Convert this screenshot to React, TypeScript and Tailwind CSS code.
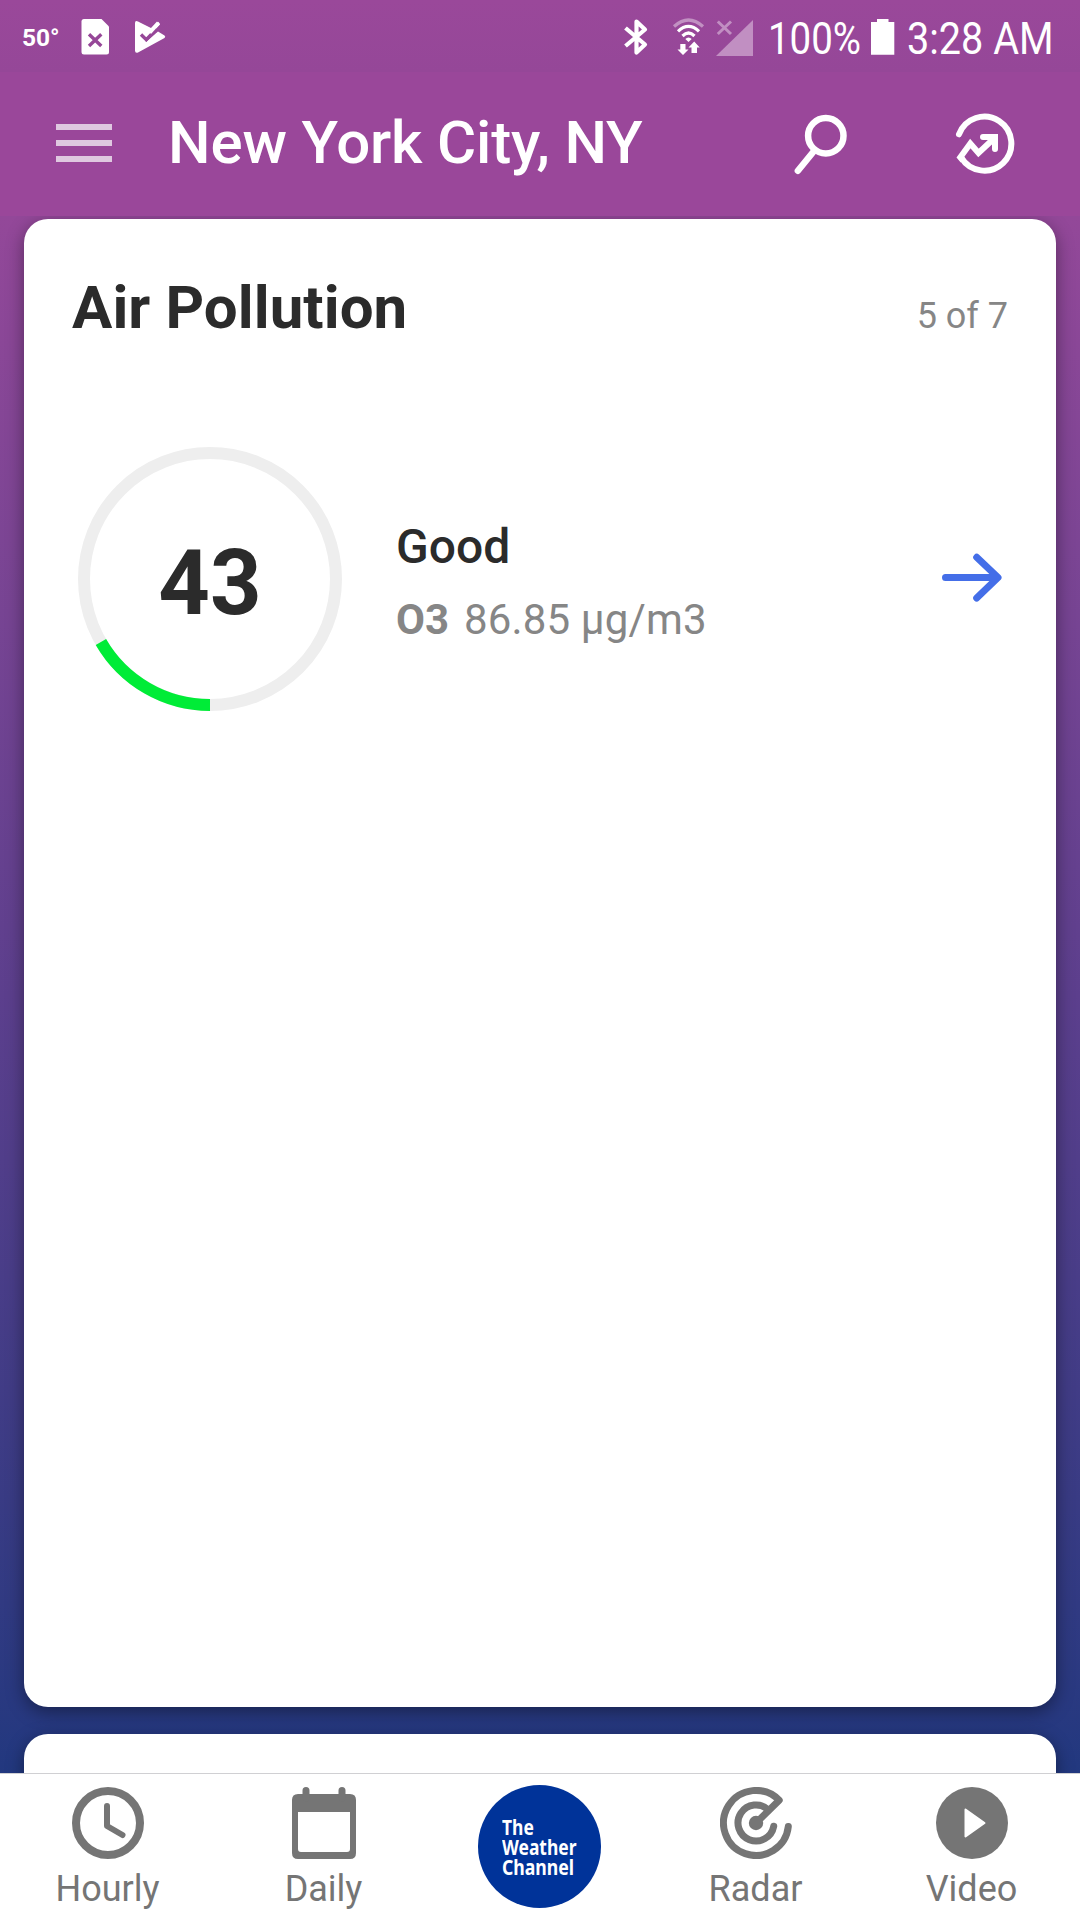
import React from "react";

function StatusBar() {
  return (
    <div className="flex h-[72px] items-center bg-linear-to-b from-[#9a489a] to-[#954798] text-white">
      <span className="ml-[22px] w-[59px] pt-[3px] text-[24.5px] leading-6 font-bold">50°</span>
      <svg className="mt-[2px] h-[36px] w-[28px]" viewBox="81 19 28 36">
        <path d="M84 19H101.500L109 26.500V52q0 2.500-2.500 2.500H84q-2.500 0-2.500-2.500V21.500Q81.500 19 84 19Z" fill="#fff" />
        <path d="M89 34.300L101.300 46M101.300 34.300L89 46" stroke="#964798" strokeWidth="3.400" />
      </svg>
      <svg className="ml-[26px] mt-[2px] h-[34px] w-[31px]" viewBox="135 20 31 34">
        <path d="M135 23q0-3 3-1.600L151 28L157 21.500L160 24.500L146 39L140.500 33.500L142 32L146 42L158 31.500L164.500 35.500q1.500 1.200 0 2.500L138 52.500q-3 1-3-2Z" fill="#fff" />
        <path d="M141 34.500L146.300 39.700L156.500 29" fill="none" stroke="#964798" strokeWidth="3.400" />
        <path d="M148.500 31L158.300 21.800L160 24L151 34Z" fill="#fff" />
      </svg>
      <div className="ml-auto flex items-center">
        <svg className="mt-[2px] h-[38px] w-[24px]" viewBox="624 18 24 38">
          <path d="M625.500 28L645 44.500L636.500 52.500V21.500L645 29.500L625.500 46" fill="none" stroke="#fff" strokeWidth="4.200" strokeLinejoin="round" />
        </svg>
        <svg className="ml-[24px] mt-[2px] h-[38px] w-[33px]" viewBox="672 18 33 38">
          <g fill="none" stroke="#fff" strokeWidth="3.200">
            <path d="M674 26.500Q688.500 13.500 703 26.500" opacity=".4" />
            <path d="M678 31.300Q688.500 21.500 699 31.300" />
            <path d="M682.500 36Q688.500 30 694.500 36" />
          </g>
          <path d="M688.500 42L685.300 39Q688.500 36 691.700 39Z" fill="#fff" />
          <path d="M680.300 44H685.500V49.500H688.500L683 55L677.500 49.500H680.300ZM691.500 53V47.500H688.500L694.200 41.500L699.700 47.500H697V53Z" fill="#fff" />
        </svg>
        <svg className="ml-[11px] mt-[2px] h-[37px] w-[37px]" viewBox="716 18 37 37">
          <path d="M753 19V55H716Z" fill="#c18fc2" />
          <path d="M717.800 20.500L731 33M731 20.500L717.800 33" stroke="#c18fc2" strokeWidth="3" />
        </svg>
        <div className="ml-[15px] w-[103px] pt-[5px]">
          <span className="block w-max origin-left scale-x-[0.855] text-[45px] leading-[72px]">100%</span>
        </div>
        <svg className="mt-[2px] h-[36px] w-[24px]" viewBox="871 19 24 36">
          <path d="M877 19H888.500V22H894.300V54.700H871V22H877Z" fill="#fff" />
        </svg>
        <div className="ml-[12px] w-[173px] pt-[5px]">
          <span className="block w-max origin-left scale-x-[0.88] text-[45px] leading-[72px]">3:28 AM</span>
        </div>
      </div>
    </div>
  );
}

function AppBar() {
  return (
    <div className="flex h-36 items-center bg-[#9a479a] pl-14 text-white">
      <div className="flex w-14 flex-col gap-2.5 pb-0.5">
        <div className="h-1.5 bg-[#dfc8e0]" />
        <div className="h-1.5 bg-[#dfc8e0]" />
        <div className="h-1.5 bg-[#dfc8e0]" />
      </div>
      <h1 className="ml-14 pb-[3px] text-[60px] leading-[70px] font-medium tracking-[-0.15px]">New York City, NY</h1>
      <svg className="ml-auto h-[62px] w-[54px]" viewBox="794 113 54 62" fill="none" stroke="#fff" strokeLinecap="round">
        <circle cx="825.800" cy="135.700" r="17.700" strokeWidth="6.500" />
        <path d="M814 151L797.900 170.800" strokeWidth="6.500" />
      </svg>
      <svg className="mr-[64px] ml-[106px] h-[62px] w-[62px]" viewBox="954 113 62 62" fill="none" stroke="#fff" strokeWidth="6">
        <path d="M959 134.300A27 27 0 1 1 961.200 157.500" strokeLinecap="round" />
        <path d="M963 160.500L960.300 157.300L970.300 143.500L978.500 153L995 137.500" />
        <path d="M983 137H995V149" strokeLinecap="round" />
      </svg>
    </div>
  );
}

function AirCard() {
  return (
    <section className="h-[1488px] shrink-0 rounded-3xl bg-white px-12 pt-[58px] shadow-[0_5px_18px_rgba(0,0,0,0.4)]">
      <div className="flex items-baseline justify-between">
        <h2 className="text-[60px] leading-[61px] font-bold tracking-[0.08px] text-[#2b2b2b]">Air Pollution</h2>
        <span className="text-4xl leading-[61px] text-[#868686]">5 of 7</span>
      </div>
      <div className="mt-[100px] flex items-center pl-1.5">
        <div className="relative flex size-[264px] items-center justify-center">
          <svg className="absolute inset-0 size-full" viewBox="-132 -132 264 264" fill="none" strokeWidth="12">
            <circle r="126" stroke="#eee" />
            <path d="M0 126A126 126 0 0 1 -109.100 63" stroke="#00ec37" />
          </svg>
          <span className="relative pt-[9px] text-[90px] leading-[100px] font-bold text-[#2b2b2b]">43</span>
        </div>
        <div className="ml-[54px] pt-1.5">
          <div className="text-5xl leading-14 font-medium text-[#2b2b2b]">Good</div>
          <div className="mt-5 flex gap-[15px] text-[42px] leading-[50px] text-[#868686]">
            <span className="font-bold">O3</span>
            <span className="tracking-[0.15px]">86.85 µg/m3</span>
          </div>
        </div>
        <svg className="mr-[5px] mb-[3px] ml-auto h-[50px] w-[62px]" viewBox="941 553 62 50" fill="none" stroke="#446ee8" strokeWidth="7" strokeLinecap="round" strokeLinejoin="round">
          <path d="M945.500 577.500H997M976.700 557.300L998 577.500L976.700 598" />
        </svg>
      </div>
    </section>
  );
}

function NavItem({ label, children }: { label: string; children: React.ReactNode }) {
  return (
    <div className="flex w-[216px] flex-col items-center pt-[13px]">
      <svg className="size-[72px]" viewBox="-36 -36 72 72" fill="none">
        {children}
      </svg>
      <span className="mt-[9px] mr-px text-4xl leading-[42px] text-[#757575]">{label}</span>
    </div>
  );
}

function BottomNav() {
  return (
    <nav className="relative flex h-[147px] border-t border-[#d0d0d3] bg-white">
      <NavItem label="Hourly">
        <circle r="32" stroke="#757575" strokeWidth="8" />
        <path d="M-1-17V3L14.500 12" stroke="#757575" strokeWidth="6" strokeLinecap="round" strokeLinejoin="round" />
      </NavItem>
      <NavItem label="Daily">
        <path fill="#757575" fillRule="evenodd" d="M-26-29H26Q32-29 32-23V30Q32 36 26 36H-26Q-32 36-32 30V-23Q-32-29-26-29ZM-26-11V26Q-26 29-23 29H23Q26 29 26 26V-11Z" />
        <path d="M-18-32.500V-25M18-32.500V-25" stroke="#757575" strokeWidth="7" strokeLinecap="round" />
      </NavItem>
      <div className="flex w-[216px] justify-center pt-[11px] pr-px">
        <div className="flex size-[123px] items-center justify-center rounded-full bg-[#003399]">
          <div className="mr-[1px] flex w-[74px] flex-col font-['Noto_Sans'] text-[20.5px] leading-5 font-bold text-white">
            <span className="w-max origin-left scale-x-[0.85]">The</span>
            <span className="w-max origin-left scale-x-[0.85]">Weather</span>
            <span className="w-max origin-left scale-x-[0.86]">Channel</span>
          </div>
        </div>
      </div>
      <NavItem label="Radar">
        <g stroke="#757575" strokeWidth="7" strokeLinecap="round" strokeLinejoin="round">
          <path d="M32.300 3.600A32.500 32.500 0 1 1 23.200-22.800L0 0" />
          <path d="M17.700 3.300A18 18 0 1 1 12.500-13" />
        </g>
        <circle r="7.200" fill="#757575" />
      </NavItem>
      <NavItem label="Video">
        <circle r="36" fill="#757575" />
        <path d="M-6.500-13.500L12.500 0L-6.500 13.500Z" fill="#fff" stroke="#fff" strokeWidth="2" strokeLinejoin="round" />
      </NavItem>
    </nav>
  );
}

export default function App() {
  return (
    <div className="flex h-[1920px] w-[1080px] flex-col overflow-hidden bg-white font-[Roboto,sans-serif]">
      <header className="relative z-10">
        <StatusBar />
        <AppBar />
      </header>
      <main className="flex flex-1 flex-col gap-[27px] overflow-hidden bg-linear-to-b from-[#934899] via-[#5c3f8d] to-[#22387f] px-6 pt-[3px]">
        <AirCard />
        <section className="h-12 shrink-0 rounded-t-3xl bg-white shadow-[0_5px_18px_rgba(0,0,0,0.4)]" />
      </main>
      <BottomNav />
    </div>
  );
}
